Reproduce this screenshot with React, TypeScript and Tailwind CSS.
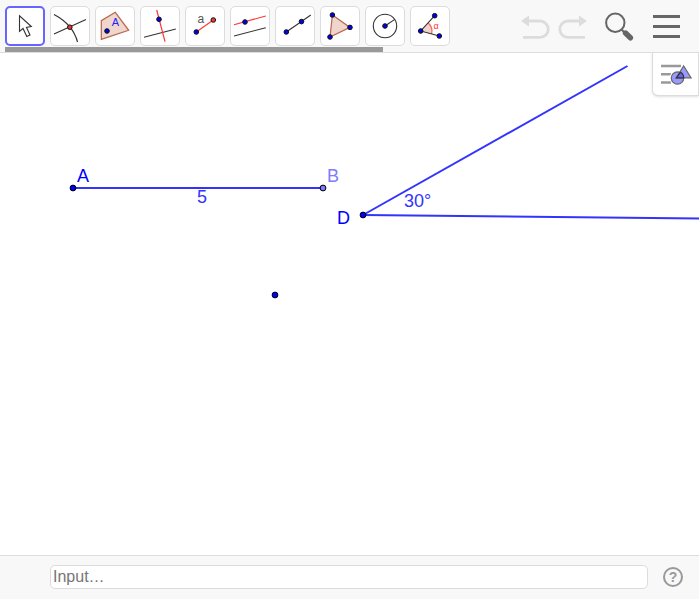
import React, { useState } from 'react';

interface DotProps {
  x: number;
  y: number;
  fill?: string;
}

function Dot({ x, y, fill = '#0000f0' }: DotProps) {
  return <circle cx={x} cy={y} r={2.3} fill={fill} stroke="#111" strokeWidth={1} />;
}

const DARK = '#333';
const RED = '#ff3333';
const BROWN = '#b5674a';
const PEACH = '#efd5cc';

const tools = [
  {
    name: 'Move',
    icon: (
      <path
        d="M14.5 9.8V25.4L18 22.5L21.8 30.6L25 29L21.5 21.5L26.3 20.5Z"
        fill="#fff"
        stroke={DARK}
        strokeWidth={1.1}
      />
    ),
  },
  {
    name: 'Point',
    icon: (
      <>
        <path d="M4 28L36 13.5M4 8.5Q23 18.5 27.5 36" stroke={DARK} strokeWidth={1.2} />
        <Dot x={19.8} y={21.2} fill="#f03030" />
      </>
    ),
  },
  {
    name: 'Point on Object',
    icon: (
      <>
        <path d="M20.3 6.3L33.7 24.3L6.3 33.3V14.7Z" fill={PEACH} stroke={BROWN} strokeWidth={1.2} />
        <Dot x={12} y={25} />
        <text x={16.7} y={20.4} fontSize={11} fill="#2222ff">A</text>
      </>
    ),
  },
  {
    name: 'Perpendicular Line',
    icon: (
      <>
        <path d="M4 31.3L35.8 23" stroke={DARK} strokeWidth={1.1} />
        <path d="M16.7 4L25 35.7" stroke={RED} strokeWidth={1.2} />
        <Dot x={19} y={13.3} />
      </>
    ),
  },
  {
    name: 'Segment with Given Length',
    icon: (
      <>
        <path d="M11.3 26L28.3 14" stroke={RED} strokeWidth={1.1} />
        <Dot x={11.3} y={26} />
        <Dot x={28.3} y={14} fill="#f03c3c" />
        <text x={12.5} y={17} fontSize={12} fill="#555">a</text>
      </>
    ),
  },
  {
    name: 'Parallel Line',
    icon: (
      <>
        <path d="M4 18.7L35.8 10" stroke={RED} strokeWidth={1.1} />
        <path d="M4 30L35.8 21.7" stroke={DARK} strokeWidth={1.1} />
        <Dot x={15} y={16} />
      </>
    ),
  },
  {
    name: 'Ray',
    icon: (
      <>
        <path d="M11.3 26L35.8 9" stroke={DARK} strokeWidth={1.1} />
        <Dot x={11.3} y={26} />
        <Dot x={26.5} y={15.6} />
      </>
    ),
  },
  {
    name: 'Polygon',
    icon: (
      <>
        <path d="M12.4 9L30 21.4L10 31Z" fill={PEACH} stroke={BROWN} strokeWidth={1.2} />
        <Dot x={12.4} y={9} />
        <Dot x={30} y={21.4} />
        <Dot x={10} y={31} />
      </>
    ),
  },
  {
    name: 'Circle with Center',
    icon: (
      <>
        <circle cx={20} cy={20} r={11.7} stroke={DARK} strokeWidth={1.1} />
        <path d="M20 20L29.8 13.4" stroke={DARK} strokeWidth={1.1} />
        <Dot x={20} y={20} />
      </>
    ),
  },
  {
    name: 'Angle',
    icon: (
      <>
        <path d="M10.7 25L18 16.7A11 11 0 0 1 21.5 27.8Z" fill={PEACH} />
        <path d="M18 16.7A11 11 0 0 1 21.5 27.8" stroke="#ff6666" strokeWidth={1.3} />
        <path d="M24.7 9.7L10.7 25L29.3 30" stroke={DARK} strokeWidth={1.1} />
        <Dot x={24.7} y={9.7} />
        <Dot x={10.7} y={25} />
        <Dot x={29.3} y={30} />
        <text x={23.6} y={23} fontSize={9} fill={RED}>α</text>
      </>
    ),
  },
];

function Toolbar() {
  const [active, setActive] = useState('Move');

  return (
    <header className="flex shrink-0 items-start justify-between border-b border-[#dcdcdc] bg-[#f8f8f8]">
      <div className="pl-[5px] pt-[6px]">
        <div className="flex gap-[5px]">
          {tools.map((tool) => (
            <button
              key={tool.name}
              aria-label={tool.name}
              aria-pressed={active === tool.name}
              onClick={() => setActive(tool.name)}
              className={`flex h-10 w-10 items-center justify-center rounded-[5px] bg-white ${
                active === tool.name ? 'border-2 border-[#6666ff]' : 'border border-[#dcdcdc]'
              }`}
            >
              <svg viewBox="2 2 36 36" className="h-9 w-9 shrink-0" fill="none">
                {tool.icon}
              </svg>
            </button>
          ))}
        </div>
        <div className="mt-px h-[5px] w-[85%] bg-[#999999]" />
      </div>

      <div className="flex h-[52px] items-center pr-[19px]">
        <button aria-label="Undo" disabled className="mr-2">
          <svg viewBox="0 0 29 28" className="h-7 w-[29px]" fill="none">
            <path d="M7 9H19A8.2 8.2 0 0 1 19 25.4H2" stroke="#dcdcdc" strokeWidth={2.8} />
            <path d="M0 9L8 3.5V14.5Z" fill="#dcdcdc" />
          </svg>
        </button>
        <button aria-label="Redo" disabled className="mr-[18px]">
          <svg viewBox="0 0 29 28" className="h-7 w-[29px]" fill="none">
            <path d="M22 9H10A8.2 8.2 0 0 0 10 25.4H27" stroke="#dcdcdc" strokeWidth={2.8} />
            <path d="M29 9L21 3.5V14.5Z" fill="#dcdcdc" />
          </svg>
        </button>
        <button aria-label="Search" className="mr-[18px]">
          <svg viewBox="0 0 30 30" className="h-[30px] w-[30px]" fill="none" stroke="#666">
            <circle cx={10.3} cy={11.7} r={9.2} strokeWidth={2} />
            <path d="M16.8 18.7L20 22" strokeWidth={2} />
            <path d="M20.5 22L25.4 26.8" strokeWidth={5.4} strokeLinecap="round" />
          </svg>
        </button>
        <button aria-label="Menu" className="flex w-[27px] flex-col gap-[7px]">
          <span className="h-[3px] w-full bg-[#666666]" />
          <span className="h-[3px] w-full bg-[#666666]" />
          <span className="h-[3px] w-full bg-[#666666]" />
        </button>
      </div>
    </header>
  );
}

const points = [
  { x: 73, y: 135, fill: '#0000ff' },
  { x: 323, y: 135, fill: '#7d7dff' },
  { x: 363, y: 162, fill: '#0000ff' },
  { x: 275, y: 242, fill: '#0000ff' },
];

const labels = [
  { text: 'A', x: 77, y: 129, fill: '#0000ff' },
  { text: 'B', x: 327, y: 129, fill: '#7d7dff' },
  { text: '5', x: 197, y: 150, fill: '#3333ff' },
  { text: 'D', x: 337, y: 171, fill: '#0000ff' },
  { text: '30°', x: 404, y: 154, fill: '#3333ff' },
];

function GraphicsView() {
  return (
    <main className="relative min-h-0 flex-1 overflow-hidden">
      <svg className="h-full w-full" fill="none" role="img" aria-label="Graphics View">
        <g stroke="#3333ff" strokeWidth={2}>
          <path d="M73 135H323" />
          <path d="M363 162L627.5 13" />
          <path d="M363 162L2363 183" />
        </g>
        {points.map((p) => (
          <circle key={`${p.x}-${p.y}`} cx={p.x} cy={p.y} r={2.9} fill={p.fill} stroke="#000" strokeWidth={1} />
        ))}
        {labels.map((l) => (
          <text key={l.text} x={l.x} y={l.y} fontSize={18} fill={l.fill}>
            {l.text}
          </text>
        ))}
      </svg>
      <button
        aria-label="Style bar"
        className="absolute right-0 top-0 flex h-[43px] w-[47px] items-center justify-center rounded-bl-md border border-t-0 border-[#dcdcdc] bg-white shadow-sm"
      >
        <svg viewBox="0 0 32 24" className="h-6 w-8" fill="none">
          <path d="M1 4H21M1 12.3H11M1 20.5H11" stroke="#999" strokeWidth={2.6} />
          <circle cx={17.5} cy={16} r={7.8} fill="#fff" />
          <path d="M23.7 1L13 18H34Z" fill="#fff" />
          <circle cx={17.5} cy={16} r={6.2} fill="#9999ff" stroke="#666" strokeWidth={1.2} />
          <path d="M23.7 4L31 15.8H16.2Z" fill="#9999ff" stroke="#666" strokeWidth={1.2} />
          <path d="M20.4 10.2A6.2 6.2 0 0 1 23.7 15.8H16.4Z" fill="#6666ee" stroke="#333" strokeWidth={1.2} />
        </svg>
      </button>
    </main>
  );
}

function InputBar() {
  return (
    <footer className="flex shrink-0 items-center border-t border-[#dcdcdc] bg-[#f8f8f8] pb-[10px] pl-[50px] pr-4 pt-[9px]">
      <input
        type="text"
        aria-label="Input"
        placeholder="Input…"
        className="h-6 min-w-0 flex-1 rounded-[5px] border border-[#dcdcdc] bg-white px-[2px] text-base text-gray-800 outline-none placeholder:text-[#757575]"
      />
      <button
        aria-label="Input help"
        className="ml-[15px] flex h-5 w-5 items-center justify-center rounded-full border-2 border-[#999999] text-sm font-bold leading-none text-[#999999]"
      >
        ?
      </button>
    </footer>
  );
}

export default function App() {
  return (
    <div className="h-screen bg-white pb-px pr-px font-['Liberation_Sans',Arial,sans-serif]">
      <div className="flex h-full flex-col">
        <Toolbar />
        <GraphicsView />
        <InputBar />
      </div>
    </div>
  );
}
